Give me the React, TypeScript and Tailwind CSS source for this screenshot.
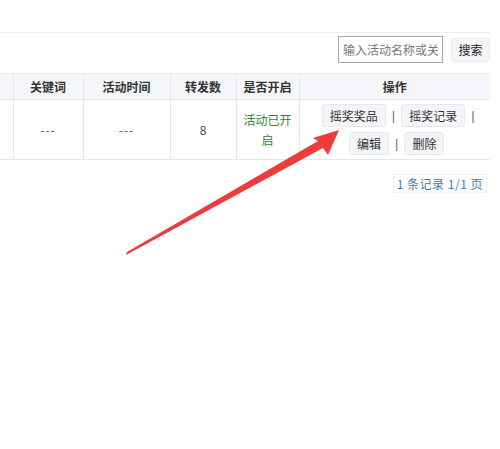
import React from "react";

const font = { fontFamily: '"Microsoft YaHei", "Noto Sans CJK SC", "Noto Sans", sans-serif' };

function ActionButton({ label }: { label: string }) {
  return (
    <span className="inline-flex h-[23px] items-center rounded-[3px] border border-[#e6e8eb] bg-[#f3f5f8] px-[7px] text-[12px] text-[#333]">
      {label}
    </span>
  );
}

function Sep() {
  return (
    <span className="mx-[6px] text-[13px] text-[#6f6f6f]" style={{ fontFamily: '"Liberation Sans", sans-serif' }}>
      |
    </span>
  );
}

export default function App() {
  return (
    <div className="relative h-[449px] w-[500px] overflow-hidden bg-white" style={font}>
      {/* toolbar */}
      <div className="mt-[32px] w-[490px] border-t border-[#eceef1]" />
      <div className="flex w-[490px] items-center justify-end gap-[8px] pt-[3px]">
        <input
          readOnly
          placeholder="输入活动名称或关键词"
          className="h-[27px] w-[105px] border border-[#a8a8a8] px-[4px] text-[12px] text-[#333] placeholder:text-[#777] outline-none"
        />
        <span className="flex h-[24px] w-[39px] items-center justify-center rounded-[3px] border border-[#eaedf1] bg-[#f3f5f8] text-[12px] text-[#222]">
          搜索
        </span>
      </div>

      {/* data table */}
      <table className="mt-[10px] w-[490px] table-fixed border-collapse text-[12px]">
        <colgroup>
          <col className="w-[13px]" />
          <col className="w-[70px]" />
          <col className="w-[87px]" />
          <col className="w-[66px]" />
          <col className="w-[63px]" />
          <col />
        </colgroup>
        <thead>
          <tr className="h-[26px] bg-[#f4f6f9] text-[#333]">
            <th className="border-y border-r border-[#e4e7ec] font-bold"></th>
            <th className="border border-[#e4e7ec] font-bold">关键词</th>
            <th className="border border-[#e4e7ec] font-bold">活动时间</th>
            <th className="border border-[#e4e7ec] font-bold">转发数</th>
            <th className="border border-[#e4e7ec] font-bold">是否开启</th>
            <th className="border-y border-l border-[#e4e7ec] font-bold">操作</th>
          </tr>
        </thead>
        <tbody>
          <tr className="h-[60px] text-center text-[#444]">
            <td className="border-y border-r border-[#e4e7ec]"></td>
            <td className="border border-[#e4e7ec] tracking-[1px] text-[#555]">---</td>
            <td className="border border-[#e4e7ec] tracking-[1px] text-[#555]">---</td>
            <td className="border border-[#e4e7ec]">8</td>
            <td className="border border-[#e4e7ec] px-[4px] leading-[20px] text-[#1f8a1f]">活动已开启</td>
            <td className="border-y border-l border-[#e4e7ec] px-[2px]">
              <div className="flex flex-col items-center gap-[5px]">
                <div className="flex items-center pl-[13px]">
                  <ActionButton label="摇奖奖品" />
                  <Sep />
                  <ActionButton label="摇奖记录" />
                  <Sep />
                </div>
                <div className="flex items-center pl-[4px]">
                  <ActionButton label="编辑" />
                  <Sep />
                  <ActionButton label="删除" />
                </div>
              </div>
            </td>
          </tr>
        </tbody>
      </table>

      {/* pager */}
      <div className="mt-[14px] flex w-[487px] justify-end">
        <span className="border border-[#eef0f3] px-[3px] text-[12px] leading-[17px] tracking-[0.5px] text-[#3a7bbf]">
          1 条记录 1/1 页
        </span>
      </div>

      {/* annotation arrow */}
      <svg className="pointer-events-none absolute left-0 top-0" width="500" height="449" viewBox="0 0 500 449">
        <polygon
          points="126,255 127,252 318,141 313,138 339,130 328,155 323,148"
          fill="#ee3b3b"
        />
      </svg>
    </div>
  );
}
